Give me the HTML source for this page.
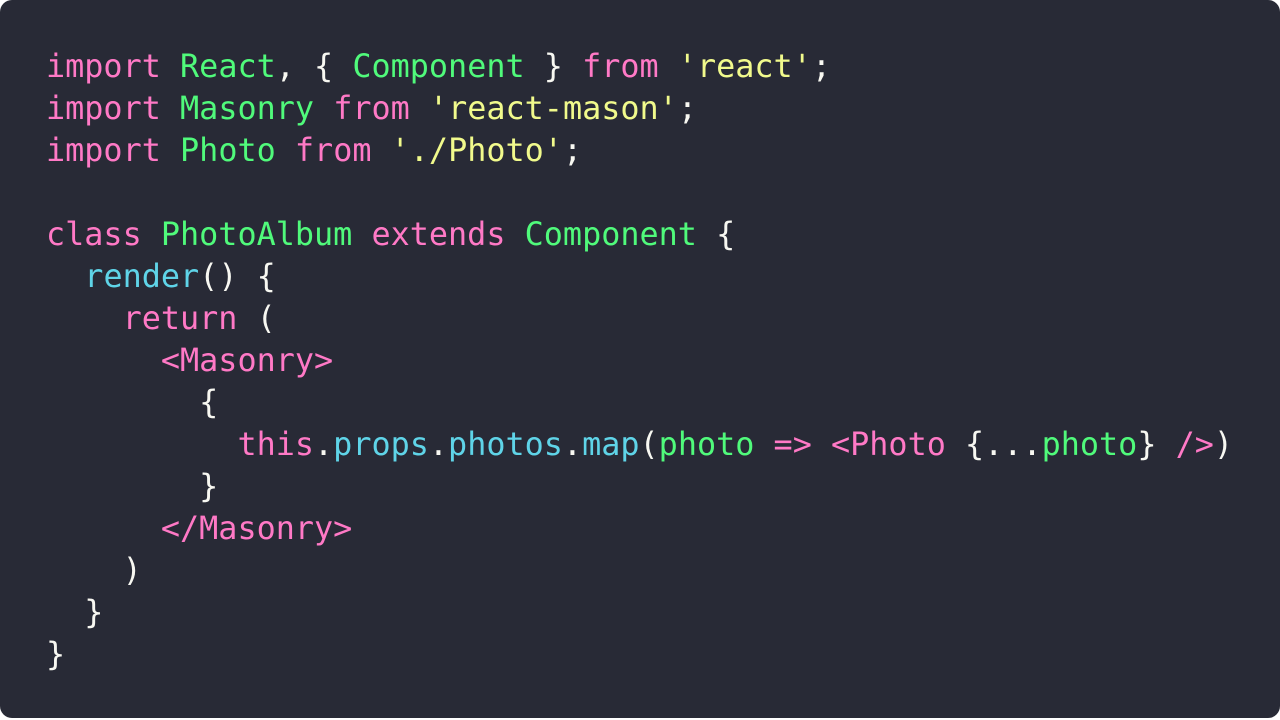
<!DOCTYPE html>
<html><head><meta charset="utf-8"><style>
html,body{margin:0;padding:0;background:#fff;}
.box{position:absolute;left:0;top:0;width:1280px;height:718px;background:#282a36;border-radius:12px;}
pre{position:absolute;left:46px;top:46px;margin:0;font-family:"DejaVu Sans Mono","Liberation Mono",monospace;font-size:31.8px;line-height:42px;color:#f8f8f2;}
.k{color:#ff79c6}.g{color:#50fa7b}.y{color:#f1fa8c}.c{color:#5fd4e8}
</style></head><body><div class="box"><pre><span class="k">import</span> <span class="g">React</span>, { <span class="g">Component</span> } <span class="k">from</span> <span class="y">'react'</span>;
<span class="k">import</span> <span class="g">Masonry</span> <span class="k">from</span> <span class="y">'react-mason'</span>;
<span class="k">import</span> <span class="g">Photo</span> <span class="k">from</span> <span class="y">'./Photo'</span>;

<span class="k">class</span> <span class="g">PhotoAlbum</span> <span class="k">extends</span> <span class="g">Component</span> {
  <span class="c">render</span>() {
    <span class="k">return</span> (
      <span class="k">&lt;Masonry&gt;</span>
        {
          <span class="k">this</span>.<span class="c">props</span>.<span class="c">photos</span>.<span class="c">map</span>(<span class="g">photo</span> <span class="k">=&gt;</span> <span class="k">&lt;Photo</span> {...<span class="g">photo</span>} <span class="k">/&gt;</span>)
        }
      <span class="k">&lt;/Masonry&gt;</span>
    )
  }
}</pre></div></body></html>
